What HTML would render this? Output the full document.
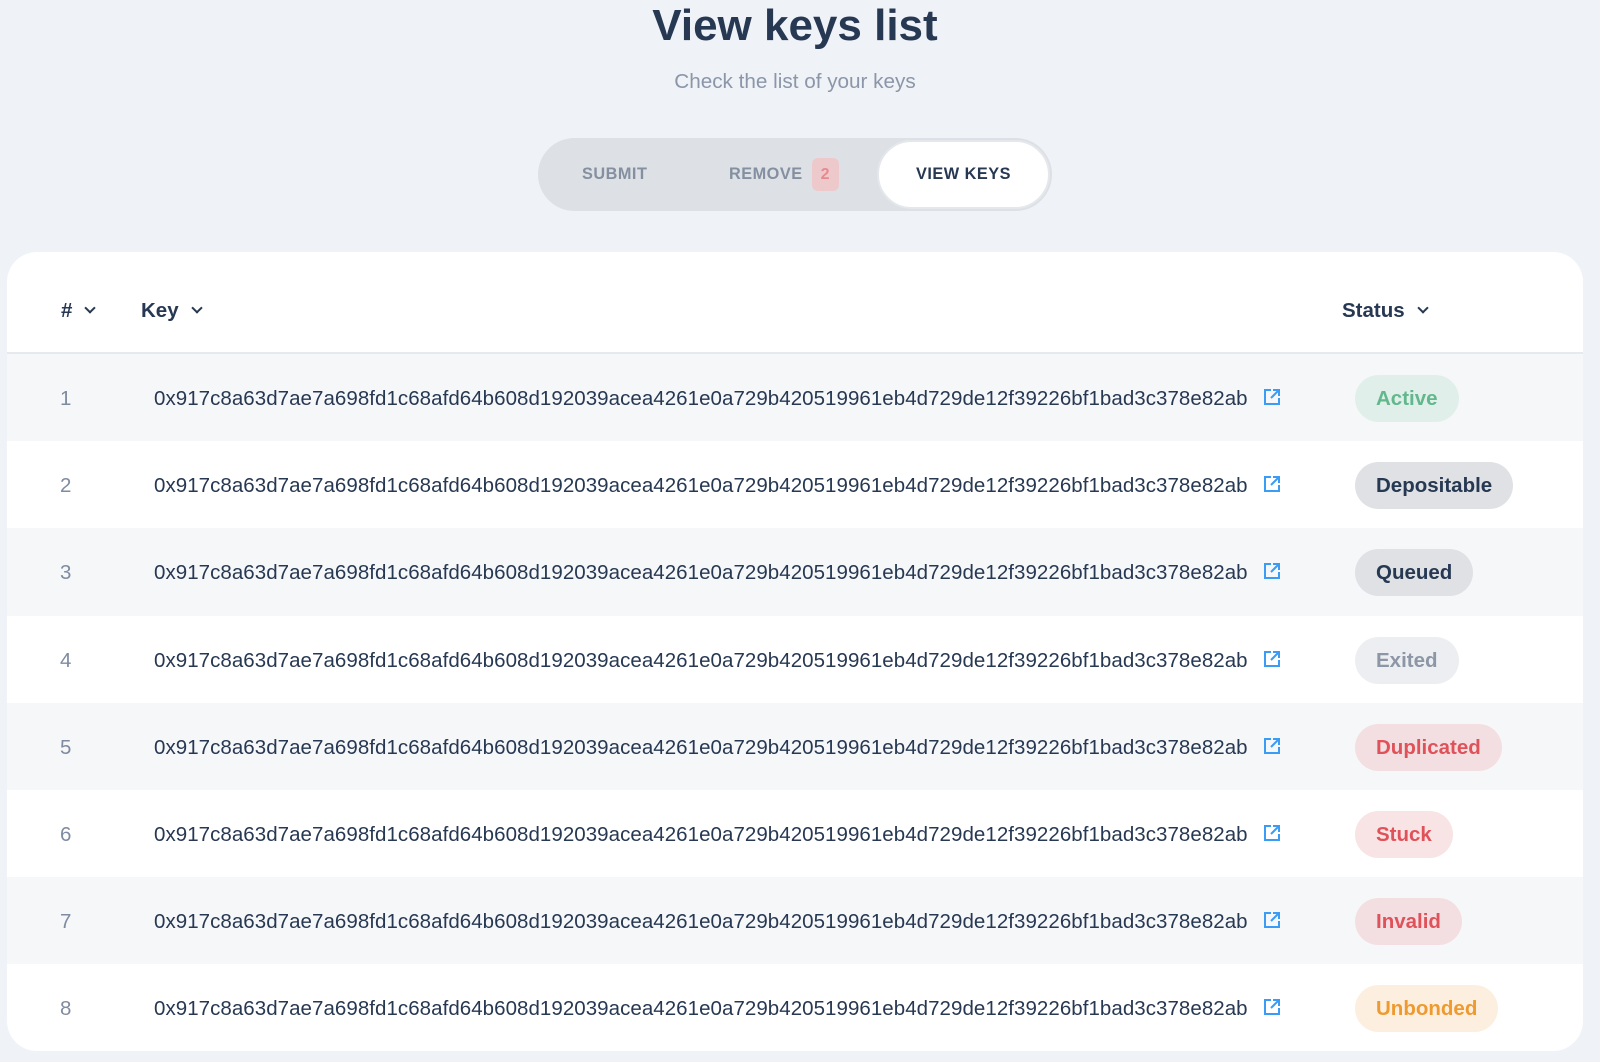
<!DOCTYPE html>
<html><head><meta charset="utf-8"><style>
*{box-sizing:border-box;margin:0;padding:0}
body{width:1600px;height:1062px;background:#eff2f6;font-family:"Liberation Sans",sans-serif;color:#273852;position:relative;overflow:hidden}
h1{position:absolute;top:0;left:0;width:1590px;text-align:center;font-size:44px;font-weight:bold;line-height:52px;color:#273852}
.sub{position:absolute;top:70px;left:0;width:1590px;text-align:center;font-size:20.7px;color:#8b96a8}
.tabs{position:absolute;left:538px;top:138px;width:514px;height:73px;border-radius:37px;background:#dde0e4}
.tab{position:absolute;top:0;height:73px;line-height:73px;font-size:16.3px;font-weight:bold;color:#8490a1;letter-spacing:.5px}
.badge{display:inline-block;width:27px;height:33px;line-height:33px;border-radius:6px;background:#eec9cc;color:#e78a8f;text-align:center;margin-left:9px;vertical-align:middle;font-size:16px;letter-spacing:0}
.active{position:absolute;left:339px;top:2px;width:173px;height:69px;border-radius:35px;background:#fff;border:2px solid #e4e7eb;text-align:center;line-height:65px;font-size:16.3px;font-weight:bold;color:#273852;letter-spacing:.5px}
.card{position:absolute;left:7px;top:252px;width:1576px;height:799px;background:#fff;border-radius:30px;overflow:hidden}
.hdr{height:102px;border-bottom:2px solid #e6e9ee;position:relative;font-size:20.5px;font-weight:bold}
.hdr span{position:absolute;top:47px}
.chev{display:inline-block;width:8px;height:8px;border-right:2px solid #273852;border-bottom:2px solid #273852;transform:rotate(45deg);margin-left:14px;position:relative;top:-5px}
.row{height:87.2px;position:relative;font-size:20.5px}
.row:nth-child(odd){background:#f6f7f9}
.n{position:absolute;left:53px;top:33px;color:#7f8ba0}
.k{position:absolute;left:147px;top:33px;color:#273852;letter-spacing:0.05px}
.ic{position:absolute;left:1256px;top:34px}
.st{position:absolute;left:1348px;top:21px;height:47px;line-height:47px;border-radius:24px;padding:0 21px;font-weight:bold;font-size:20.5px}
</style></head><body>
<h1>View keys list</h1>
<div class="sub">Check the list of your keys</div>
<div class="tabs">
<div class="tab" style="left:44px">SUBMIT</div>
<div class="tab" style="left:191px">REMOVE<span class="badge">2</span></div>
<div class="active">VIEW KEYS</div>
</div>
<div class="card">
<div class="hdr"><span style="left:54px">#<i class="chev"></i></span><span style="left:134px">Key<i class="chev"></i></span><span style="left:1335px">Status<i class="chev"></i></span></div>
<div>
<div class="row"><span class="n">1</span><span class="k">0x917c8a63d7ae7a698fd1c68afd64b608d192039acea4261e0a729b420519961eb4d729de12f39226bf1bad3c378e82ab</span><svg class="ic" width="18" height="18" viewBox="0 0 18 18" fill="none" stroke="#3b9cf5" stroke-width="2"><path d="M8 2H2v14h14v-6"/><path d="M10 2h6v6M16 2L8 10"/></svg><span class="st" style="background:#e1efea;color:#62b88c">Active</span></div>
<div class="row"><span class="n">2</span><span class="k">0x917c8a63d7ae7a698fd1c68afd64b608d192039acea4261e0a729b420519961eb4d729de12f39226bf1bad3c378e82ab</span><svg class="ic" width="18" height="18" viewBox="0 0 18 18" fill="none" stroke="#3b9cf5" stroke-width="2"><path d="M8 2H2v14h14v-6"/><path d="M10 2h6v6M16 2L8 10"/></svg><span class="st" style="background:#dfe1e5;color:#273852">Depositable</span></div>
<div class="row"><span class="n">3</span><span class="k">0x917c8a63d7ae7a698fd1c68afd64b608d192039acea4261e0a729b420519961eb4d729de12f39226bf1bad3c378e82ab</span><svg class="ic" width="18" height="18" viewBox="0 0 18 18" fill="none" stroke="#3b9cf5" stroke-width="2"><path d="M8 2H2v14h14v-6"/><path d="M10 2h6v6M16 2L8 10"/></svg><span class="st" style="background:#dfe1e5;color:#273852">Queued</span></div>
<div class="row"><span class="n">4</span><span class="k">0x917c8a63d7ae7a698fd1c68afd64b608d192039acea4261e0a729b420519961eb4d729de12f39226bf1bad3c378e82ab</span><svg class="ic" width="18" height="18" viewBox="0 0 18 18" fill="none" stroke="#3b9cf5" stroke-width="2"><path d="M8 2H2v14h14v-6"/><path d="M10 2h6v6M16 2L8 10"/></svg><span class="st" style="background:#eceef1;color:#8c96a6">Exited</span></div>
<div class="row"><span class="n">5</span><span class="k">0x917c8a63d7ae7a698fd1c68afd64b608d192039acea4261e0a729b420519961eb4d729de12f39226bf1bad3c378e82ab</span><svg class="ic" width="18" height="18" viewBox="0 0 18 18" fill="none" stroke="#3b9cf5" stroke-width="2"><path d="M8 2H2v14h14v-6"/><path d="M10 2h6v6M16 2L8 10"/></svg><span class="st" style="background:#f3dfe1;color:#e0525a">Duplicated</span></div>
<div class="row"><span class="n">6</span><span class="k">0x917c8a63d7ae7a698fd1c68afd64b608d192039acea4261e0a729b420519961eb4d729de12f39226bf1bad3c378e82ab</span><svg class="ic" width="18" height="18" viewBox="0 0 18 18" fill="none" stroke="#3b9cf5" stroke-width="2"><path d="M8 2H2v14h14v-6"/><path d="M10 2h6v6M16 2L8 10"/></svg><span class="st" style="background:#f8e4e5;color:#e0525a">Stuck</span></div>
<div class="row"><span class="n">7</span><span class="k">0x917c8a63d7ae7a698fd1c68afd64b608d192039acea4261e0a729b420519961eb4d729de12f39226bf1bad3c378e82ab</span><svg class="ic" width="18" height="18" viewBox="0 0 18 18" fill="none" stroke="#3b9cf5" stroke-width="2"><path d="M8 2H2v14h14v-6"/><path d="M10 2h6v6M16 2L8 10"/></svg><span class="st" style="background:#f3dfe1;color:#e0525a">Invalid</span></div>
<div class="row"><span class="n">8</span><span class="k">0x917c8a63d7ae7a698fd1c68afd64b608d192039acea4261e0a729b420519961eb4d729de12f39226bf1bad3c378e82ab</span><svg class="ic" width="18" height="18" viewBox="0 0 18 18" fill="none" stroke="#3b9cf5" stroke-width="2"><path d="M8 2H2v14h14v-6"/><path d="M10 2h6v6M16 2L8 10"/></svg><span class="st" style="background:#fcefdf;color:#ef9a2f">Unbonded</span></div>
</div>
</div>
</body></html>
